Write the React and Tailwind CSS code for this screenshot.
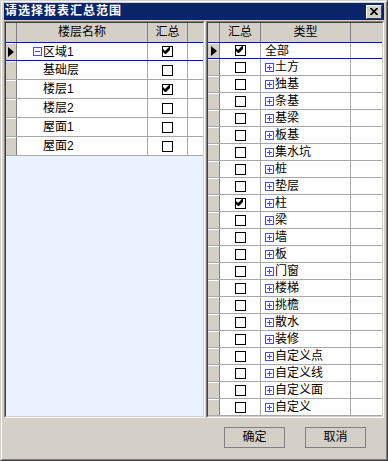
import React from 'react';

const leftRows = [
  { name: '区域1', checked: true, root: true, selected: true },
  { name: '基础层', checked: false },
  { name: '楼层1', checked: true },
  { name: '楼层2', checked: false },
  { name: '屋面1', checked: false },
  { name: '屋面2', checked: false },
];

const rightRows = [
  { name: '全部', checked: true, selected: true, plain: true },
  { name: '土方' }, { name: '独基' }, { name: '条基' }, { name: '基梁' },
  { name: '板基' }, { name: '集水坑' }, { name: '桩' }, { name: '垫层' },
  { name: '柱', checked: true }, { name: '梁' }, { name: '墙' }, { name: '板' },
  { name: '门窗' }, { name: '楼梯' }, { name: '挑檐' }, { name: '散水' },
  { name: '装修' }, { name: '自定义点' }, { name: '自定义线' }, { name: '自定义面' },
  { name: '自定义' },
];

// classic 7x7 check glyph
const CheckBox = ({ checked }) => (
  <span className="w-[11px] h-[11px] border border-black bg-white block">
    {checked && (
      <svg width="9" height="9" viewBox="0 0 9 9" className="block">
        <path d="M0 2 L2 4 L6 0 L7 0 L7 3 L3 7 L2 7 L0 5 Z" fill="black" />
      </svg>
    )}
  </span>
);

const Expander = ({ minus }) => (
  <svg width="9" height="9" viewBox="0 0 9 9" className="shrink-0">
    <rect x="0.5" y="0.5" width="8" height="8" fill="white" stroke="#4848f4" />
    <path d={minus ? 'M2 4.5 H7' : 'M2 4.5 H7 M4.5 2 V7'} stroke="#4848f4" />
  </svg>
);

const Arrow = () => (
  <svg width="6" height="10" viewBox="0 0 6 10" className="block">
    <path d="M0 0 L6 5 L0 10 Z" fill="black" />
  </svg>
);

const RowHead = ({ width, selected }) => (
  <div className={`${width} h-full bg-[#d4d0c8] border-r border-[#808080] shadow-[inset_0_1px_0_#ffffff] flex items-center justify-center`}>
    {selected && <Arrow />}
  </div>
);

const Panel = ({ width, children }) => (
  <div className={`${width} h-full border border-t-[#808080] border-l-[#808080] border-r-white border-b-white`}>
    <div className="h-full border border-t-[#404040] border-l-[#404040] border-r-[#d4d0c8] border-b-[#d4d0c8] flex flex-col overflow-hidden">
      {children}
    </div>
  </div>
);

const App = () => {
  return (
    <div className="w-[388px] h-[461px] bg-[#d4d0c8] border border-t-[#d4d0c8] border-l-[#d4d0c8] border-r-[#404040] border-b-[#404040] text-[12px] text-black font-['Liberation_Sans','Noto_Sans_CJK_SC',sans-serif]">
      <div className="h-full border border-t-white border-l-white border-r-[#808080] border-b-[#808080] flex flex-col px-[2px] pt-[1px]">
        {/* Title bar */}
        <div className="h-[17px] bg-[#0a246a] flex items-center justify-between pl-[1px] pr-[2px]">
          <span className="text-white font-bold tracking-[1px] leading-[17px]">请选择报表汇总范围</span>
          <button className="w-[16px] h-[14px] bg-[#d4d0c8] border border-t-white border-l-white border-r-[#404040] border-b-[#404040] flex items-center justify-center">
            <svg width="8" height="7" viewBox="0 0 8 7">
              <path d="M0.5 0 L7.5 7 M7.5 0 L0.5 7" stroke="black" strokeWidth="1.8" />
            </svg>
          </button>
        </div>

        {/* Panels */}
        <div className="h-[397px] mt-[1px] flex">
          <Panel width="w-[201px]">
            <div className="h-[19px] flex bg-[#d4d0c8] shrink-0">
              <div className="w-[11px] border-r border-[#808080]" />
              <div className="w-[131px] border-r border-[#808080] text-center leading-[19px]">楼层名称</div>
              <div className="w-[40px] border-r border-[#808080] text-center leading-[19px]">汇总</div>
              <div className="flex-1" />
            </div>
            <div className="flex-1 bg-[#eaf2fe]">
              {leftRows.map((r) => (
                <div
                  key={r.name}
                  className={`h-[19px] flex bg-white border-b ${r.selected ? 'border-t border-[#0000ff]' : 'border-[#a8a8a8]'}`}
                >
                  <RowHead width="w-[11px]" selected={r.selected} />
                  <div className={`w-[131px] border-r border-[#a8a8a8] flex items-center ${r.root ? 'pl-[16px]' : 'pl-[26px]'}`}>
                    {r.root && <Expander minus />}
                    <span className={r.root ? 'ml-[1px]' : ''}>{r.name}</span>
                  </div>
                  <div className="w-[40px] border-r border-[#a8a8a8] flex items-center justify-center">
                    <CheckBox checked={r.checked} />
                  </div>
                  <div className="flex-1" />
                </div>
              ))}
            </div>
          </Panel>

          <div className="w-[1px]" />

          <Panel width="w-[178px]">
            <div className="h-[19px] flex bg-[#d4d0c8] shrink-0">
              <div className="w-[12px] border-r border-[#808080]" />
              <div className="w-[41px] border-r border-[#808080] text-center leading-[19px]">汇总</div>
              <div className="w-[90px] border-r border-[#808080] text-center leading-[19px]">类型</div>
              <div className="flex-1" />
            </div>
            <div className="flex-1 bg-white">
              {rightRows.map((r) => (
                <div
                  key={r.name}
                  className={`h-[17px] flex border-b ${r.selected ? 'border-t border-[#0000ff]' : 'border-[#a8a8a8]'}`}
                >
                  <RowHead width="w-[12px]" selected={r.selected} />
                  <div className="w-[41px] border-r border-[#a8a8a8] flex items-center justify-center">
                    <CheckBox checked={r.checked} />
                  </div>
                  <div className="w-[90px] border-r border-[#a8a8a8] flex items-center pl-[4px] gap-[1px]">
                    {!r.plain && <Expander />}
                    <span className="leading-[16px]">{r.name}</span>
                  </div>
                  <div className="flex-1" />
                </div>
              ))}
            </div>
          </Panel>
        </div>

        {/* Buttons */}
        <div className="flex-1 flex justify-end items-start pt-[9px] pr-[18px] gap-[20px]">
          <button className="w-[61px] h-[21px] border border-[#808080] bg-[#d4d0c8] leading-[19px]">确定</button>
          <button className="w-[61px] h-[21px] border border-[#808080] bg-[#d4d0c8] leading-[19px]">取消</button>
        </div>
      </div>
    </div>
  );
};

export default App;
